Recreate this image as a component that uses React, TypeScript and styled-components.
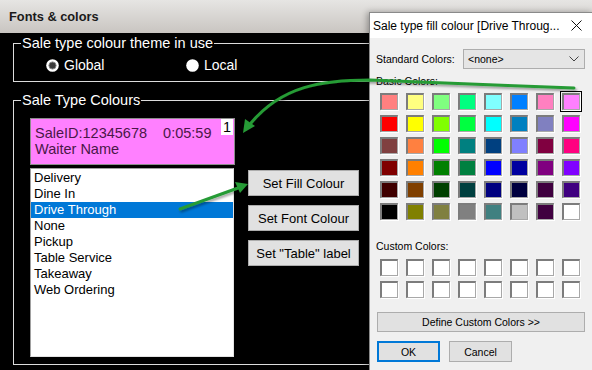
import React from "react";
import styled, { createGlobalStyle } from "styled-components";

const GlobalStyle = createGlobalStyle`
  html, body { margin: 0; padding: 0; background: #000; }
  body { font-family: "Liberation Sans", Arial, sans-serif; }
  * { box-sizing: border-box; }
`;

const Desktop = styled.div`
  position: relative;
  width: 592px;
  height: 370px;
  overflow: hidden;
  background: #000;
`;

const MainWindow = styled.div`
  display: flex;
  flex-direction: column;
  width: 592px;
  height: 370px;
`;

const MainTitleBar = styled.div`
  flex: none;
  height: 33px;
  display: flex;
  align-items: center;
  padding-left: 9px;
  background: linear-gradient(#e6e5e3, #c9c5c1);
  font: bold 12.8px "Liberation Sans", Arial, sans-serif;
  color: #1a1a1a;
`;

const MainBody = styled.div`
  flex: 1;
  display: flex;
  flex-direction: column;
  gap: 10px;
  padding: 2px 0 0 13px;
  background: #000;
  color: #fff;
`;

const GroupBox = styled.fieldset`
  margin: 0;
  width: 585px;
  min-width: 0;
  border: 1px solid #dcdcdc;
  padding: 0 0 0 7px;
`;

const GroupLegend = styled.legend`
  padding: 0 1px;
  font-size: 14.5px;
  line-height: 16px;
  color: #fff;
`;

const RadioRow = styled.div`
  display: flex;
  padding: 6px 0 8px 25px;
`;

const RadioItem = styled.label`
  display: flex;
  align-items: center;
  gap: 5px;
  width: 140px;
  height: 16px;
  font-size: 14px;
  color: #fff;
`;

const ColoursLayout = styled.div`
  display: flex;
  gap: 13px;
  padding: 10px 0 7px 9px;
`;

const LeftColumn = styled.div`
  display: flex;
  flex-direction: column;
  align-items: flex-start;
  gap: 3px;
`;

const Preview = styled.div`
  width: 205px;
  height: 47px;
  border: 1px solid #8c8c8c;
  background: #ff80ff;
  color: #4a1848;
  padding: 0 1px 0 4px;
  font-size: 14.5px;
`;

const PreviewTop = styled.div`
  display: flex;
  align-items: flex-start;
`;

const PreviewText = styled.span<{ $gap?: number }>`
  margin-top: 6px;
  margin-left: ${(p) => p.$gap ?? 0}px;
  line-height: 16px;
  white-space: nowrap;
`;

const Badge = styled.span`
  margin-left: auto;
  height: 16px;
  line-height: 16px;
  padding: 0 2px;
  background: #fff;
  color: #000;
`;

const PreviewLine = styled.div`
  line-height: 16px;
`;

const ListBox = styled.ul`
  margin: 0;
  list-style: none;
  width: 204px;
  height: 189px;
  padding: 1px 0 0 0;
  background: #fff;
  border: 1px solid #a0a0a0;
  border-right-color: #e3e3e3;
  border-bottom-color: #e3e3e3;
`;

const ListItem = styled.li<{ $selected?: boolean }>`
  height: 16px;
  line-height: 16px;
  padding-left: 3px;
  font-size: 13px;
  color: ${(p) => (p.$selected ? "#fff" : "#000")};
  background: ${(p) => (p.$selected ? "#0078d7" : "transparent")};
`;

const ButtonColumn = styled.div`
  display: flex;
  flex-direction: column;
  gap: 9px;
  margin-top: 52px;
`;

const ActionButton = styled.button`
  width: 111px;
  height: 26px;
  padding: 0;
  border: 1px solid #adadad;
  background: #e1e1e1;
  font: 13px "Liberation Sans", Arial, sans-serif;
  color: #000;
`;

/* ---------- Colour dialog ---------- */

const Dialog = styled.div`
  position: absolute;
  left: 369px;
  top: 12px;
  width: 224px;
  height: 362px;
  display: flex;
  flex-direction: column;
  border: 1px solid #8a8a8a;
  background: #f0f0f0;
  box-shadow: -2px 0 6px rgba(0, 0, 0, 0.3);
  font: 10.5px "Liberation Sans", Arial, sans-serif;
  color: #000;
`;

const DialogTitleBar = styled.div`
  flex: none;
  height: 25px;
  display: flex;
  align-items: center;
  justify-content: space-between;
  padding: 0 10px 0 3px;
  background: #fff;
  font-size: 12px;
  white-space: nowrap;
`;

const DialogBody = styled.div`
  display: flex;
  flex-direction: column;
  padding: 11px 7px 0 6px;
`;

const StandardRow = styled.div`
  display: flex;
  align-items: center;
  height: 20px;
`;

const FieldLabel = styled.span<{ $width?: number; $top?: number }>`
  display: block;
  width: ${(p) => (p.$width ? `${p.$width}px` : "auto")};
  margin-top: ${(p) => p.$top ?? 0}px;
  line-height: 13px;
  flex: none;
`;

const Dropdown = styled.div`
  flex: 1;
  height: 20px;
  display: flex;
  align-items: center;
  justify-content: space-between;
  padding: 0 5px 0 4px;
  border: 1px solid #adadad;
  background: #e5e5e5;
`;

const SwatchGrid = styled.div<{ $top: number }>`
  display: grid;
  grid-template-columns: repeat(8, 18px);
  column-gap: 8px;
  row-gap: 5px;
  margin: ${(p) => p.$top}px 0 0 4px;
`;

const Swatch = styled.div<{ $color: string; $selected?: boolean }>`
  width: 18px;
  height: 17px;
  border-style: solid;
  border-width: 2px 1px 1px 2px;
  border-color: #7c7c7c #a8a8a8 #a8a8a8 #7c7c7c;
  box-shadow: 1px 1px 0 #fff;
  background: ${(p) => p.$color};
  outline: ${(p) => (p.$selected ? "1px solid #000" : "none")};
  outline-offset: 1px;
`;

const DialogButton = styled.button<{ $width?: number; $default?: boolean }>`
  width: ${(p) => (p.$width ? `${p.$width}px` : "auto")};
  height: ${(p) => (p.$width ? 21 : 20)}px;
  padding: 0;
  border: ${(p) => (p.$default ? "2px solid #0078d7" : "1px solid #adadad")};
  background: #e1e1e1;
  font: 10.5px "Liberation Sans", Arial, sans-serif;
  color: #000;
`;

const DefineButton = styled(DialogButton)`
  margin: 14px 0 0 1px;
`;

const FooterRow = styled.div`
  display: flex;
  gap: 9px;
  margin: 9px 0 0 1px;
`;

const ArrowLayer = styled.svg`
  position: absolute;
  left: 0;
  top: 0;
  pointer-events: none;
`;

const basicColors = [
  "#ff8080", "#ffff80", "#80ff80", "#00ff80", "#80ffff", "#0080ff", "#ff80c0", "#ff80ff",
  "#ff0000", "#ffff00", "#80ff00", "#00ff40", "#00ffff", "#0080c0", "#8080c0", "#ff00ff",
  "#804040", "#ff8040", "#00ff00", "#008080", "#004080", "#8080ff", "#800040", "#ff0080",
  "#800000", "#ff8000", "#008000", "#008040", "#0000ff", "#0000a0", "#800080", "#8000ff",
  "#400000", "#804000", "#004000", "#004040", "#000080", "#000040", "#400040", "#400080",
  "#000000", "#808000", "#808040", "#808080", "#408080", "#c0c0c0", "#400040", "#ffffff",
];

const saleTypes = [
  "Delivery",
  "Dine In",
  "Drive Through",
  "None",
  "Pickup",
  "Table Service",
  "Takeaway",
  "Web Ordering",
];

const RadioDot = ({ checked }: { checked: boolean }) => (
  <svg width="13" height="13" viewBox="0 0 13 13">
    <circle cx="6.5" cy="6.5" r="6.3" fill="#fff" />
    {checked && <circle cx="6.5" cy="6.5" r="3.6" fill="#3a3a3a" stroke="#8a8a8a" strokeWidth="1" />}
  </svg>
);

export default function App() {
  return (
    <Desktop>
      <GlobalStyle />
      <MainWindow>
        <MainTitleBar>Fonts &amp; colors</MainTitleBar>
        <MainBody>
          <GroupBox>
            <GroupLegend>Sale type colour theme in use</GroupLegend>
            <RadioRow>
              <RadioItem>
                <RadioDot checked />
                Global
              </RadioItem>
              <RadioItem>
                <RadioDot checked={false} />
                Local
              </RadioItem>
            </RadioRow>
          </GroupBox>
          <GroupBox>
            <GroupLegend>Sale Type Colours</GroupLegend>
            <ColoursLayout>
              <LeftColumn>
                <Preview>
                  <PreviewTop>
                    <PreviewText>SaleID:12345678</PreviewText>
                    <PreviewText $gap={16}>0:05:59</PreviewText>
                    <Badge>1</Badge>
                  </PreviewTop>
                  <PreviewLine>Waiter Name</PreviewLine>
                </Preview>
                <ListBox>
                  {saleTypes.map((t) => (
                    <ListItem key={t} $selected={t === "Drive Through"}>
                      {t}
                    </ListItem>
                  ))}
                </ListBox>
              </LeftColumn>
              <ButtonColumn>
                <ActionButton>Set Fill Colour</ActionButton>
                <ActionButton>Set Font Colour</ActionButton>
                <ActionButton>Set "Table" label</ActionButton>
              </ButtonColumn>
            </ColoursLayout>
          </GroupBox>
        </MainBody>
      </MainWindow>

      <Dialog>
        <DialogTitleBar>
          <span>Sale type fill colour [Drive Throug...</span>
          <svg width="11" height="11" viewBox="0 0 11 11">
            <path d="M0.5 0.5 L10.5 10.5 M10.5 0.5 L0.5 10.5" stroke="#111" strokeWidth="1" />
          </svg>
        </DialogTitleBar>
        <DialogBody>
          <StandardRow>
            <FieldLabel $width={87}>Standard Colors:</FieldLabel>
            <Dropdown>
              <span>&lt;none&gt;</span>
              <svg width="10" height="6" viewBox="0 0 10 6">
                <path d="M0.5 0.5 L5 5 L9.5 0.5" fill="none" stroke="#444" strokeWidth="1" />
              </svg>
            </Dropdown>
          </StandardRow>
          <FieldLabel $top={6}>Basic Colors:</FieldLabel>
          <SwatchGrid $top={5}>
            {basicColors.map((c, i) => (
              <Swatch key={i} $color={c} $selected={i === 7} />
            ))}
          </SwatchGrid>
          <FieldLabel $top={20}>Custom Colors:</FieldLabel>
          <SwatchGrid $top={6}>
            {Array.from({ length: 16 }).map((_, i) => (
              <Swatch key={i} $color="#fff" />
            ))}
          </SwatchGrid>
          <DefineButton>Define Custom Colors &gt;&gt;</DefineButton>
          <FooterRow>
            <DialogButton $width={63} $default>OK</DialogButton>
            <DialogButton $width={63}>Cancel</DialogButton>
          </FooterRow>
        </DialogBody>
      </Dialog>

      <ArrowLayer width="592" height="370" viewBox="0 0 592 370">
        <defs>
          <filter id="arrowShadow" x="-10%" y="-10%" width="120%" height="140%">
            <feDropShadow dx="1.5" dy="2" stdDeviation="1.2" floodColor="#000" floodOpacity="0.35" />
          </filter>
        </defs>
        <g filter="url(#arrowShadow)" fill="none" stroke="#269b36" strokeWidth="3" strokeLinecap="round">
          <path d="M574 88 L370 80 C322 80 282 86 251 123" />
          <path d="M180 209 L238 188" />
        </g>
        <g fill="#269b36">
          <polygon points="243,133 255,126 245,119" />
          <polygon points="248,184 240,193 235,182" />
        </g>
      </ArrowLayer>
    </Desktop>
  );
}
